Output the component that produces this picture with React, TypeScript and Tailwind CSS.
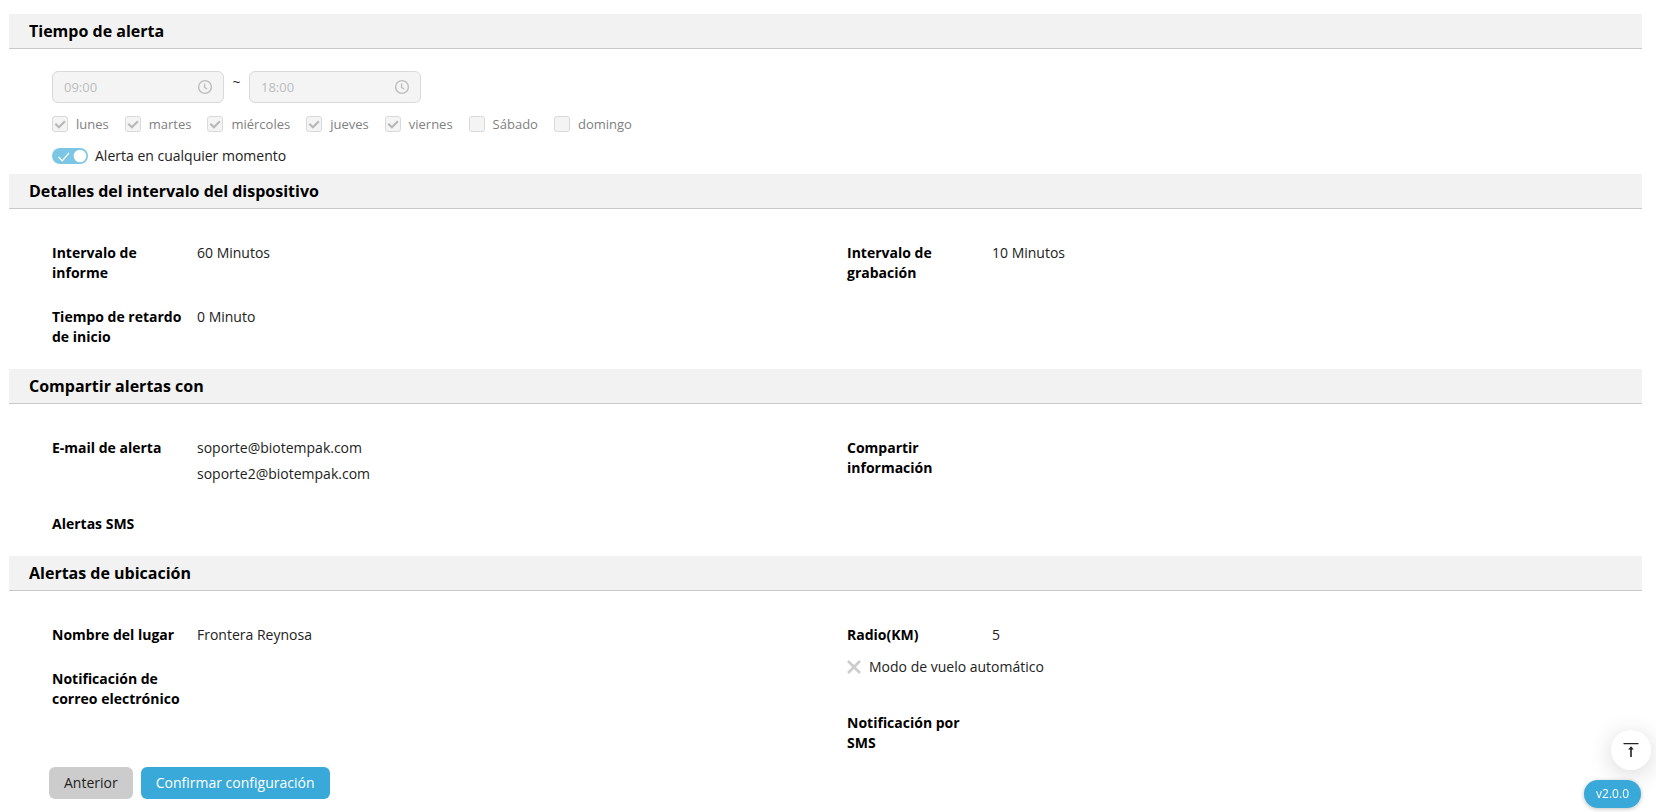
import type { ReactNode } from 'react'

const DAYS = [
  { id: 'mon', label: 'lunes', active: true },
  { id: 'tue', label: 'martes', active: true },
  { id: 'wed', label: 'miércoles', active: true },
  { id: 'thu', label: 'jueves', active: true },
  { id: 'fri', label: 'viernes', active: true },
  { id: 'sat', label: 'Sábado', active: false },
  { id: 'sun', label: 'domingo', active: false },
]

function SectionTitle({ children }: { children: ReactNode }) {
  return (
    <h2 className="h-[35px] border-b border-[#c8c8c8] bg-[#f2f2f2] pl-5 text-base leading-[34px] font-bold text-black">
      {children}
    </h2>
  )
}

function Columns({ children }: { children: ReactNode }) {
  return <div className="grid grid-cols-2 pt-[34px] pb-[22px] pl-[43px]">{children}</div>
}

function Column({ children }: { children: ReactNode }) {
  return <dl className="flex flex-col gap-6">{children}</dl>
}

function Field({ label, children }: { label: string; children?: ReactNode }) {
  return (
    <div className="flex gap-3">
      <dt className="w-[133px] shrink-0 font-bold text-black">{label}</dt>
      <dd>{children}</dd>
    </div>
  )
}

function TimeInput({ label, value }: { label: string; value: string }) {
  return (
    <div className="flex h-8 w-[172px] items-center rounded-md border border-[#d9d9d9] bg-[#f4f4f4] pr-[10px] pl-[11px] text-[#bdbdbd]">
      <input
        type="text"
        aria-label={label}
        value={value}
        disabled
        readOnly
        className="w-full min-w-0 bg-transparent text-[13px]"
      />
      <svg viewBox="0 0 16 16" className="size-4 shrink-0" fill="none" stroke="currentColor">
        <circle cx="8" cy="8" r="6.4" strokeWidth="1.4" />
        <path d="M7.600 4.500V8.500L10.200 9.800" strokeWidth="1.300" />
      </svg>
    </div>
  )
}

function DayCheckbox({ id, label, active }: { id: string; label: string; active: boolean }) {
  return (
    <label htmlFor={id} className="flex items-center gap-2 text-[13px] text-[#808080]">
      <span className="grid size-4">
        <input
          id={id}
          type="checkbox"
          checked={active}
          disabled
          readOnly
          className="col-start-1 row-start-1 size-4 appearance-none rounded-[3px] border border-[#d9d9d9] bg-[#f4f4f4]"
        />
        {active && (
          <svg
            viewBox="0 0 16 16"
            className="col-start-1 row-start-1 size-4 text-[#b8b8b8]"
            fill="none"
            stroke="currentColor"
            strokeWidth="2.2"
          >
            <path d="M3.300 7.700l3.600 3.500 6-5.900" />
          </svg>
        )}
      </span>
      {label}
    </label>
  )
}

export default function App() {
  return (
    <main className="bg-white pt-[14px] pr-[14px] pb-[13px] pl-[9px] font-['Open_Sans',sans-serif] text-sm text-[#222222]">
      <section>
        <SectionTitle>Tiempo de alerta</SectionTitle>
        <div className="pt-[22px] pb-2 pl-[43px]">
          <div className="flex">
            <TimeInput label="Hora de inicio" value="09:00" />
            <span className="w-[25px] text-center leading-[22px]">~</span>
            <TimeInput label="Hora de fin" value="18:00" />
          </div>
          <div className="flex h-[42px] items-center gap-4">
            {DAYS.map((day) => (
              <DayCheckbox key={day.id} {...day} />
            ))}
          </div>
          <label htmlFor="anytime" className="flex h-[21px] items-center gap-[7px]">
            <span className="grid h-4 w-9">
              <input
                id="anytime"
                type="checkbox"
                role="switch"
                checked
                disabled
                readOnly
                className="col-start-1 row-start-1 h-4 w-9 appearance-none rounded-full bg-[#7cc6e5]"
              />
              <svg viewBox="0 0 36 16" className="col-start-1 row-start-1 h-4 w-9" fill="none">
                <path d="M6.5 9l3.8 3.900 6.700-8" stroke="#ffffff" strokeWidth="1.3" />
                <circle cx="28" cy="8" r="6.300" fill="#ffffff" />
              </svg>
            </span>
            Alerta en cualquier momento
          </label>
        </div>
      </section>

      <section>
        <SectionTitle>Detalles del intervalo del dispositivo</SectionTitle>
        <Columns>
          <Column>
            <Field label="Intervalo de informe">60 Minutos</Field>
            <Field label="Tiempo de retardo de inicio">0 Minuto</Field>
          </Column>
          <Column>
            <Field label="Intervalo de grabación">10 Minutos</Field>
          </Column>
        </Columns>
      </section>

      <section>
        <SectionTitle>Compartir alertas con</SectionTitle>
        <Columns>
          <Column>
            <Field label="E-mail de alerta">
              <ul className="flex flex-col gap-[6px] pb-[6px]">
                <li>soporte@biotempak.com</li>
                <li>soporte2@biotempak.com</li>
              </ul>
            </Field>
            <Field label="Alertas SMS" />
          </Column>
          <Column>
            <Field label="Compartir información" />
          </Column>
        </Columns>
      </section>

      <section>
        <SectionTitle>Alertas de ubicación</SectionTitle>
        <div className="grid grid-cols-2 pt-[34px] pb-[14px] pl-[43px]">
          <Column>
            <Field label="Nombre del lugar">Frontera Reynosa</Field>
            <Field label="Notificación de correo electrónico" />
          </Column>
          <div>
            <Column>
              <Field label="Radio(KM)">5</Field>
            </Column>
            <p className="flex items-center gap-2 pt-3 pb-9">
              <svg viewBox="0 0 14 14" className="size-[14px]" stroke="#cccccc" strokeWidth="2.6">
                <path d="M1 1l12 12M13 1L1 13" />
              </svg>
              Modo de vuelo automático
            </p>
            <Column>
              <Field label="Notificación por SMS" />
            </Column>
          </div>
        </div>
      </section>

      <div className="flex gap-2 pl-10">
        <button type="button" className="h-8 rounded-md bg-[#cccccc] px-[15px]">
          Anterior
        </button>
        <button type="button" className="h-8 rounded-md bg-[#39a9d9] px-[15px] font-medium text-white">
          Confirmar configuración
        </button>
      </div>

      <button
        type="button"
        aria-label="Volver arriba"
        className="fixed right-[5px] bottom-[42px] flex size-10 items-center justify-center rounded-full bg-white shadow-[0_4px_24px_rgba(0,0,0,0.16)]"
      >
        <svg viewBox="0 0 16 16" className="size-4" fill="#222222">
          <path d="M.5 1h15v1.300H.5zM7.200 15V7.500H5.200L8 4.300l2.800 3.200H8.800V15z" />
        </svg>
      </button>
      <span className="fixed right-[15px] bottom-1 rounded-full bg-[#39a9d9] px-3 text-xs leading-7 font-medium text-white shadow-[0_1px_4px_rgba(0,0,0,0.25)]">
        v2.0.0
      </span>
    </main>
  )
}
